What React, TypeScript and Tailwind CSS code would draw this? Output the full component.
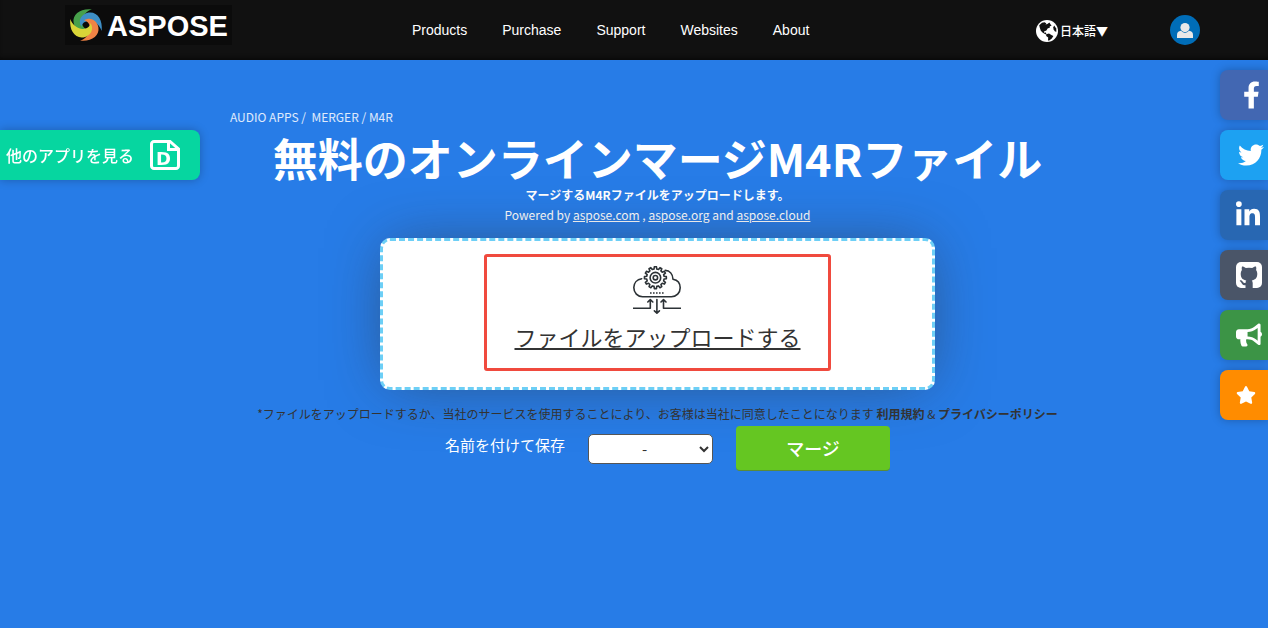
import type { ReactNode } from 'react';
import {
  FaBullhorn,
  FaFacebookF,
  FaLinkedinIn,
  FaStar,
  FaTwitter,
} from 'react-icons/fa';

const menu = ['Products', 'Purchase', 'Support', 'Websites', 'About'];

interface SideItem {
  label: string;
  color: string;
  icon: ReactNode;
}

function GitHubSquare() {
  return (
    <svg viewBox="0 0 26 26" className="h-[26px] w-[26px]" aria-hidden="true">
      <rect width="26" height="26" rx="5" fill="currentColor" />
      <path
        d="M6 4.6C7.4 4.6 8.8 5.3 9.8 6Q13 5.4 16.2 6C17.2 5.3 18.6 4.6 20 4.6Q20.6 6.4 20.1 8Q21.3 9.6 21.3 11.8C21.3 16.4 18.8 18 15.8 18.4Q16.7 19.4 16.7 21V26H9.5V23.2C6.6 23.8 6 21.8 5.4 20.8C4.9 20 4.4 19.5 3.8 19C3.6 18.4 4.6 18 5.6 18.6C7 19.6 7.2 21.6 9.5 21C9.5 19.8 9.8 18.9 10.3 18.4C7.2 18 4.7 16.4 4.7 11.8Q4.7 9.6 5.9 8Q5.4 6.4 6 4.6Z"
        fill="#4a5568"
      />
    </svg>
  );
}

const sideItems: SideItem[] = [
  { label: 'Facebook', color: 'bg-[#4267b2] pl-[23px]', icon: <FaFacebookF className="h-[30px] w-[17px]" /> },
  { label: 'Twitter', color: 'bg-[#1da1f2] pl-[18px]', icon: <FaTwitter className="h-[26px] w-[26px]" /> },
  { label: 'LinkedIn', color: 'bg-[#2867b2] pl-4', icon: <FaLinkedinIn className="h-7 w-6" /> },
  { label: 'GitHub', color: 'bg-[#4a5568] pl-4', icon: <GitHubSquare /> },
  { label: 'Announcements', color: 'bg-[#3c9446] pl-4', icon: <FaBullhorn className="h-7 w-[26px]" /> },
  { label: 'Bookmark', color: 'bg-[#ff8c00] pl-4', icon: <FaStar className="h-5 w-5" /> },
];

function Logo() {
  const blade = 'M-14 6C-26 -14 -14 -34 8 -38C34 -42 52 -16 48 18C42 2 30 -10 12 -12C-2 -13 -12 -6 -14 6Z';
  return (
    <a
      href="#"
      className="flex h-10 items-center gap-1 bg-[#0b0b0b] px-1 text-[29px] font-bold text-white"
    >
      <svg viewBox="-52 -52 104 104" className="h-[34px] w-[34px]" aria-hidden="true">
        <path d={blade} fill="#47a04b" transform="rotate(-90)" />
        <path d={blade} fill="#3f8fc6" />
        <path d={blade} fill="#f08345" transform="rotate(90)" />
        <path d={blade} fill="#d9d538" transform="rotate(180)" />
      </svg>
      <span className="pt-1">ASPOSE</span>
    </a>
  );
}

function Globe() {
  return (
    <svg viewBox="0 0 22 22" className="h-[22px] w-[22px]" aria-hidden="true">
      <circle cx="11" cy="11" r="11" fill="#fff" />
      <path
        d="M3.2 5.2L6 2.8L8.6 2.2L10.4 3.4L9.4 4.6L11.4 4L13.4 2.4L14.6 4.4L15.6 5.6L13.6 6.6L14 7.6L11.6 8.6L10.4 10.4L8 11.4L8.2 12.8L9.8 12.6L10.6 14.4L9.4 14.2L6.8 12.8L4.8 10.8L3.8 7.8Z"
        fill="#111"
      />
      <path d="M10.2 14.2L13 13.4L15.8 15.2L17.4 16L15.8 18.4L13.2 20.4L12 20.4L12.2 17.6L10.2 16Z" fill="#111" />
      <path d="M18.2 5.6L20.2 8.6L20.4 11.8L19 11.6L17.6 9.6L17.2 7.4Z" fill="#111" />
    </svg>
  );
}

function Header() {
  return (
    <header className="flex h-[60px] items-center bg-[#111] pr-[68px] pl-[65px] font-['Liberation_Sans',Arial,sans-serif] shadow-[inset_0_-4px_4px_-2px_#080808]">
      <div className="-mt-2.5 flex w-[347px]">
        <Logo />
      </div>
      <nav className="flex flex-1 gap-[35px] text-sm text-white">
        {menu.map((item) => (
          <a key={item} href="#">{item}</a>
        ))}
      </nav>
      <button
        type="button"
        className="mt-0.5 mr-[62px] flex items-center gap-0.5 font-['Noto_Sans_CJK_JP',sans-serif] text-xs font-medium text-white"
      >
        <Globe />
        日本語▼
      </button>
      <button
        type="button"
        aria-label="Account"
        className="flex h-[30px] w-[30px] items-center justify-center rounded-full bg-[#006db8]"
      >
        <svg viewBox="0 0 16 15" className="h-[15px] w-4" fill="#e8e8e8" aria-hidden="true">
          <circle cx="8" cy="4.6" r="4.6" />
          <path d="M0 15V12Q0 8.4 4 7.8Q8 12 12 7.8Q16 8.4 16 12V15Z" />
        </svg>
      </button>
    </header>
  );
}

// Gear outline: alternates between tooth and valley radius
function gearPath(cx: number, cy: number, teeth: number) {
  const points: string[] = [];
  const step = (Math.PI * 2) / teeth;
  for (let i = 0; i < teeth; i++) {
    const mid = i * step - Math.PI / 2;
    [[-0.3, 8.8], [-0.18, 11], [0.18, 11], [0.3, 8.8]].forEach(([offset, r]) => {
      const a = mid + offset * step;
      points.push(`${(cx + r * Math.cos(a)).toFixed(2)} ${(cy + r * Math.sin(a)).toFixed(2)}`);
    });
  }
  return `M${points.join('L')}Z`;
}

function CloudGear() {
  return (
    <svg
      viewBox="0 0 48 48"
      className="h-12 w-12"
      fill="none"
      stroke="#2c3236"
      strokeWidth="1.6"
      strokeLinecap="round"
      strokeLinejoin="round"
      aria-hidden="true"
    >
      <path d={gearPath(22.4, 11.7, 12)} />
      <circle cx="22.4" cy="11.7" r="5.3" />
      <circle cx="22.4" cy="11.7" r="2.2" />
      <path d="M8.7 12.7C4 13.4 0.8 17 0.8 21.6C0.8 26.8 4.6 30.7 9.6 30.7H38.4C43.4 30.7 47.2 26.8 47.2 21.8C47.2 17.4 44.4 14 40 13.2C39.8 8 36.8 4.6 32.2 4.4" />
      <path d="M17 27H31" strokeDasharray="1.6 1.4" strokeLinecap="butt" />
      <path d="M0.5 42.3H17.3V33.8M14.8 36L17.3 33.6L19.8 36" />
      <path d="M47.5 42.3H30.5V33.8M28 36L30.5 33.6L33 36" />
      <path d="M23.9 33.5V47M21.4 44.8L23.9 47.2L26.4 44.8" />
    </svg>
  );
}

function OtherApps() {
  return (
    <a
      href="#"
      className="fixed top-[130px] left-0 flex h-[50px] w-[200px] items-center justify-between rounded-r-lg bg-[#06d6a0] pr-5 pl-1.5 text-base font-medium text-white shadow-[0_0_10px_rgba(0,0,0,0.25)]"
    >
      他のアプリを見る
      <svg viewBox="0 0 30 30" className="h-[30px] w-[30px]" aria-hidden="true">
        <path
          d="M4 1.5H20L28.5 9V26A2.5 2.5 0 0 1 26 28.5H4A2.5 2.5 0 0 1 1.5 26V4A2.5 2.5 0 0 1 4 1.5Z"
          fill="none"
          stroke="#fff"
          strokeWidth="3"
        />
        <path d="M18.5 2V9.5H28" fill="none" stroke="#fff" strokeWidth="3" />
        <text x="6" y="25" fill="#fff" fontSize="18" fontWeight="bold" fontFamily="'DejaVu Sans', sans-serif">D</text>
      </svg>
    </a>
  );
}

function SideBar() {
  return (
    <aside className="fixed top-[70px] right-0 flex flex-col gap-2.5">
      {sideItems.map(({ label, color, icon }) => (
        <a
          key={label}
          href="#"
          aria-label={label}
          className={`flex h-[50px] w-12 items-center rounded-l-lg text-white shadow-[0_0_10px_rgba(0,0,0,0.25)] *:shrink-0 ${color}`}
        >
          {icon}
        </a>
      ))}
    </aside>
  );
}

export default function App() {
  return (
    <div className="min-h-screen bg-[#277ce7] font-['Noto_Sans_CJK_JP',sans-serif] text-white">
      <Header />
      <OtherApps />
      <SideBar />

      <main className="pt-[47px] pl-[47px]">
        <div className="mx-auto flex max-w-[855px] flex-col items-center">
          {/* Breadcrumb */}
          <nav className="self-start text-xs leading-5 text-white/85">
            <a href="#">AUDIO APPS</a> /&nbsp; <a href="#">MERGER</a> / M4R
          </nav>

          <h1 className="mt-1 text-[45px] leading-[54px] font-bold">
            無料のオンラインマージM4Rファイル
          </h1>
          <h2 className="text-xs leading-5 font-bold">マージするM4Rファイルをアップロードします。</h2>
          <p className="text-xs leading-5">
            Powered by <a href="#" className="underline">aspose.com</a> ,{' '}
            <a href="#" className="underline">aspose.org</a> and{' '}
            <a href="#" className="underline">aspose.cloud</a>
          </p>

          {/* Upload area */}
          <div className="mt-[13px] flex w-full max-w-[555px] justify-center rounded-[10px] border-3 border-dashed border-[#6dcff6] bg-white pt-[13px] pb-4 shadow-[0_0_60px_-10px_rgba(51,51,51,0.6)]">
            <button
              type="button"
              className="flex flex-col items-center rounded-[3px] border-3 border-[#f04a3e] px-[27px] pt-[9px] pb-4 text-[#333]"
            >
              <CloudGear />
              <span className="mt-1.5 text-[22px] leading-8 underline">ファイルをアップロードする</span>
            </button>
          </div>

          <p className="mt-3 text-xs leading-6 text-[#333]">
            *ファイルをアップロードするか、当社のサービスを使用することにより、お客様は当社に同意したことになります{' '}
            <a href="#" className="font-bold">利用規約</a> &amp;{' '}
            <a href="#" className="font-bold">プライバシーポリシー</a>
          </p>

          {/* Save options */}
          <div className="flex items-center gap-[23px] pl-5">
            <label htmlFor="format" className="pb-1.5 text-[15px]">名前を付けて保存</label>
            <select
              id="format"
              className="h-[30px] w-[125px] rounded-[5px] border border-[#555] bg-white text-center text-[15px] text-[#333]"
            >
              <option>-</option>
            </select>
            <button
              type="button"
              className="h-[45px] w-[154px] rounded border-b border-[#5a8a3a] bg-[#65c622] text-lg font-medium"
            >
              マージ
            </button>
          </div>
        </div>
      </main>
    </div>
  );
}
